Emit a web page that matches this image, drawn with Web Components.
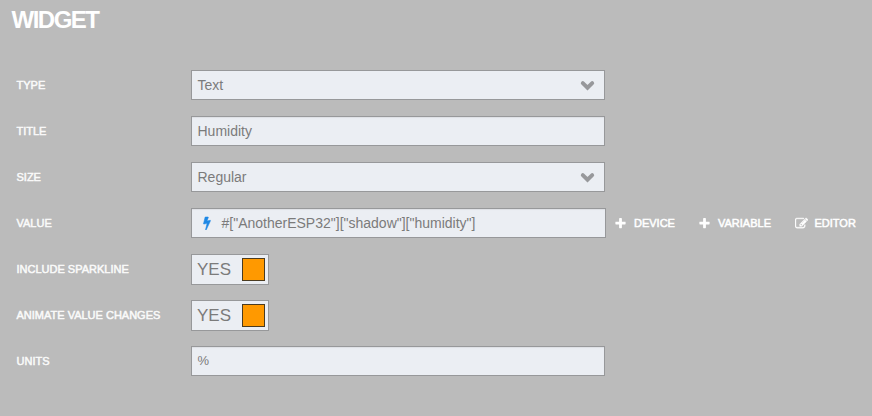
<!DOCTYPE html>
<html lang="en">
<head>
<meta charset="utf-8">
<title>Widget</title>
<style>
html, body { margin: 0; height: 100%; background: #bbbbbb; }
body { font-family: "Liberation Sans", Arial, sans-serif; }
</style>
</head>
<body>
<widget-form></widget-form>
<script>
const define = (name, html) => customElements.define(name, class extends HTMLElement {
  constructor() {
    super();
    this.attachShadow({ mode: 'open' }).innerHTML = html;
  }
});

define('form-row', `
<style>
:host { display: flex; align-items: center; height: 46px; }
.label { width: 174.5px; flex: none; font-size: 11px; line-height: 14px; -webkit-text-stroke: 0.5px #fafafa; color: #fafafa; white-space: nowrap; }
.content { display: flex; align-items: center; }
</style>
<div class="label"><slot name="label"></slot></div>
<div class="content"><slot></slot></div>`);

define('text-field', `
<style>
:host { display: flex; align-items: center; box-sizing: border-box; width: 414px; height: 30px; padding: 0 5.5px; border: 1px solid #97989a; background: #ebeef3; box-shadow: inset 0 1px 1px rgba(0,0,0,.06); color: #7b7b7b; font-size: 14px; line-height: 18px; white-space: nowrap; }
</style>
<slot></slot>`);

define('select-field', `
<style>
:host { display: flex; align-items: center; justify-content: space-between; box-sizing: border-box; width: 414px; height: 30px; padding: 0 9px 0 5.5px; border: 1px solid #97989a; background: #ebeef3; color: #7b7b7b; font-size: 14px; line-height: 18px; }
svg { display: block; }
</style>
<slot></slot>
<svg width="15" height="12" viewBox="0 0 15 12"><path d="M2.8 4.100 7.500 8.700 12.200 4.100" fill="none" stroke="#97989b" stroke-width="3.9" stroke-linecap="round"/></svg>`);

define('bound-field', `
<style>
:host { display: flex; align-items: center; box-sizing: border-box; width: 415px; height: 30px; padding: 0 8px; border: 1px solid #97989a; background: #ebeef3; box-shadow: inset 0 1px 1px rgba(0,0,0,.06); color: #7b7b7b; font-size: 14px; line-height: 18px; white-space: nowrap; }
svg { display: block; margin-right: 7.5px; }
</style>
<svg width="14" height="14" viewBox="0 0 1792 1792"><path fill="#1e88e5" stroke="#1e88e5" stroke-width="70" d="M1333 566q18 20 7 44l-540 1157q-13 25-42 25-4 0-14-2-17-5-25.5-19t-4.5-30l197-808-406 101q-4 1-12 1-18 0-31-11-18-15-13-39l201-825q4-14 16-23t28-9h328q19 0 32 12.500t13 29.500q0 8-5 18l-171 463 396-98q8-2 12-2 19 0 34 15z"/></svg>
<slot></slot>`);

define('toggle-switch', `
<style>
:host { display: flex; align-items: center; justify-content: space-between; box-sizing: border-box; width: 78px; height: 31px; margin-top: 1px; padding: 0 3px 0 5px; border: 1px solid #97989a; background: #ebeef3; color: #7b7b7b; font-size: 17px; line-height: 20px; }
.knob { box-sizing: border-box; width: 23px; height: 23px; border: 1px solid #4a3b20; background: #ff9900; }
</style>
<slot></slot><div class="knob"></div>`);

define('action-link', `
<style>
:host { display: flex; align-items: center; box-sizing: border-box; color: #fff; font-size: 11px; line-height: 14px; -webkit-text-stroke: 0.5px #fff; white-space: nowrap; }
::slotted(svg) { display: block; width: 13px; height: 13px; fill: #fff; margin-right: 7px; }
</style>
<slot name="icon"></slot><slot></slot>`);

const plus = '<svg slot="icon" viewBox="0 0 1792 1792"><path d="M1600 736v192q0 40-28 68t-68 28h-416v416q0 40-28 68t-68 28h-192q-40 0-68-28t-28-68v-416h-416q-40 0-68-28t-28-68v-192q0-40 28-68t68-28h416v-416q0-40 28-68t68-28h192q40 0 68 28t28 68v416h416q40 0 68 28t28 68z"/></svg>';
const pencil = '<svg slot="icon" viewBox="0 0 1792 1792"><path stroke="#fff" stroke-width="50" d="M888 1184l116-116-152-152-116 116v56h96v96h56zm440-720q-16-16-33 1l-350 350q-17 17-1 33t33-1l350-350q17-17 1-33zm80 594v190q0 119-84.500 203.500t-203.500 84.500h-832q-119 0-203.500-84.500t-84.500-203.500v-832q0-119 84.500-203.500t203.500-84.500h832q63 0 117 25 15 7 18 23 3 17-9 29l-49 49q-14 14-32 8-23-6-45-6h-832q-66 0-113 47t-47 113v832q0 66 47 113t113 47h832q66 0 113-47t47-113v-126q0-13 9-22l64-64q15-15 35-7t20 29zm-96-738l288 288-672 672h-288v-288zm444 132l-92 92-288-288 92-92q28-28 68-28t68 28l152 152q28 28 28 68t-28 68z"/></svg>';

define('widget-form', `
<style>
:host { display: block; }
h1 { margin: 0; padding: 6px 0 0 11.5px; height: 56px; box-sizing: border-box; font-size: 24px; line-height: 28px; font-weight: 700; letter-spacing: -1.5px; color: #fff; }
.rows { padding: 6px 0 0 16.5px; }
.a { margin-left: 8px; width: 84px; } .b { width: 96.5px; }
.unit { font-size: 13px; }
</style>
<h1>WIDGET</h1>
<div class="rows">
<form-row><span slot="label">TYPE</span><select-field>Text</select-field></form-row>
<form-row><span slot="label">TITLE</span><text-field>Humidity</text-field></form-row>
<form-row><span slot="label">SIZE</span><select-field>Regular</select-field></form-row>
<form-row><span slot="label">VALUE</span><bound-field>#["AnotherESP32"]["shadow"]["humidity"]</bound-field><action-link class="a">${plus}DEVICE</action-link><action-link class="b">${plus}VARIABLE</action-link><action-link>${pencil}EDITOR</action-link></form-row>
<form-row><span slot="label">INCLUDE SPARKLINE</span><toggle-switch>YES</toggle-switch></form-row>
<form-row><span slot="label">ANIMATE VALUE CHANGES</span><toggle-switch>YES</toggle-switch></form-row>
<form-row><span slot="label">UNITS</span><text-field class="unit">%</text-field></form-row>
</div>`);
</script>
</body>
</html>
